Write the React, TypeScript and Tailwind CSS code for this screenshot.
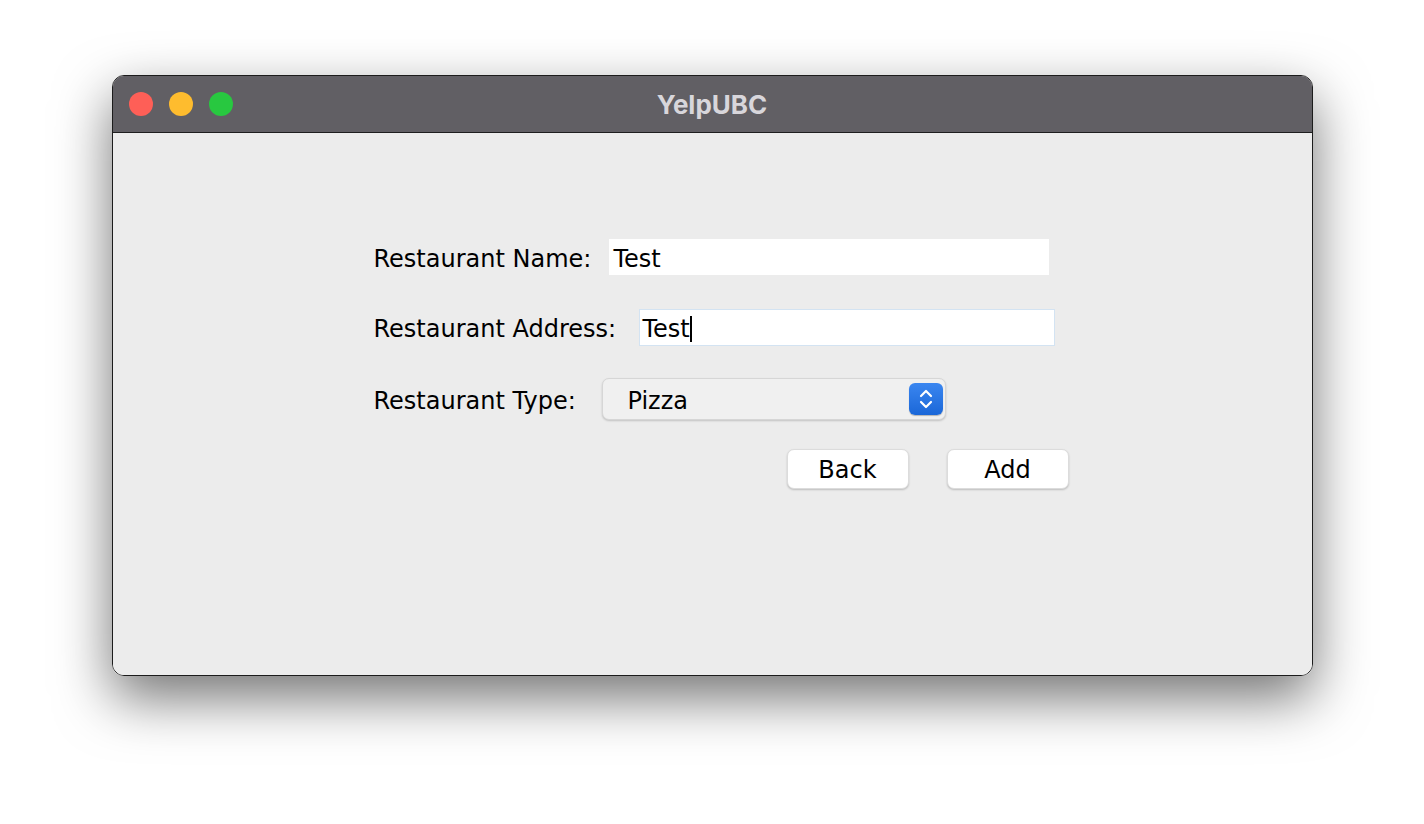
import React from "react";

const fieldFont = { fontFamily: '"DejaVu Sans", "Liberation Sans", sans-serif' };

function TrafficLights() {
  return (
    <div className="flex items-center gap-[16px] pl-[16px]">
      <span className="block w-[24px] h-[24px] rounded-full bg-[#fe5f57]" />
      <span className="block w-[24px] h-[24px] rounded-full bg-[#febc2e]" />
      <span className="block w-[24px] h-[24px] rounded-full bg-[#28c840]" />
    </div>
  );
}

function Stepper() {
  return (
    <span className="flex items-center justify-center w-[34px] h-[32px] rounded-[6px] bg-gradient-to-b from-[#3a86f0] to-[#1a67d8] shadow-[0_1px_1px_rgba(0,0,0,0.25)]">
      <svg width="18" height="26" viewBox="0 0 18 26" fill="none">
        <path d="M4 10 L9 5 L14 10" stroke="white" strokeWidth="2.2" strokeLinecap="round" strokeLinejoin="round" />
        <path d="M4 16 L9 21 L14 16" stroke="white" strokeWidth="2.2" strokeLinecap="round" strokeLinejoin="round" />
      </svg>
    </span>
  );
}

export default function App() {
  return (
    <div className="w-[1424px] h-[824px] bg-white overflow-hidden pt-[75px]">
      {/* Window */}
      <div className="mx-auto w-[1201px] h-[601px] rounded-[12px] border border-[#1c1c1c] overflow-hidden flex flex-col shadow-[0_22px_55px_rgba(0,0,0,0.55)]">
        {/* Title bar */}
        <div className="relative h-[57px] bg-[#615f64] border-b border-[#1e1e1e] flex items-center">
          <TrafficLights />
          <div
            className="absolute inset-0 flex items-center justify-center text-[26px] font-bold text-[#d8d6db]"
            style={{ fontFamily: 'Inter, "Liberation Sans", sans-serif' }}
          >
            YelpUBC
          </div>
        </div>

        {/* Content */}
        <div className="flex-1 bg-[#ececec] pl-[261px] pt-[106px] text-black text-[24px]" style={fieldFont}>
          <div className="flex items-center h-[36px]">
            <span className="w-[235px] shrink-0 pt-[3px]">Restaurant Name:</span>
            <div className="w-[440px] h-[36px] bg-white flex items-center pl-[5px] pt-[3px]">Test</div>
          </div>

          <div className="flex items-center h-[37px] mt-[34px]">
            <span className="w-[265px] shrink-0 pt-[3px]">Restaurant Address:</span>
            <div className="w-[416px] h-[37px] bg-white border border-[#d3e3f2] flex items-center pl-[3px] pt-[3px]">
              <span>Test</span>
              <span className="w-[2px] h-[26px] bg-black" />
            </div>
          </div>

          <div className="flex items-center h-[42px] mt-[32px]">
            <span className="w-[228px] shrink-0 pt-[3px]">Restaurant Type:</span>
            <div className="w-[344px] h-[42px] rounded-[7px] bg-[#f0f0f0] border border-[#d6d6d6] shadow-[0_1px_2px_rgba(0,0,0,0.18)] flex items-center justify-between pl-[25px] pr-[2px]">
              <span className="pt-[3px]">Pizza</span>
              <Stepper />
            </div>
          </div>

          <div className="flex items-center gap-[38px] ml-[413px] mt-[29px]">
            <button className="w-[122px] h-[40px] rounded-[7px] bg-white border border-[#dcdcdc] shadow-[0_1px_2px_rgba(0,0,0,0.2)] flex items-center justify-center pt-[2px]">
              Back
            </button>
            <button className="w-[122px] h-[40px] rounded-[7px] bg-white border border-[#dcdcdc] shadow-[0_1px_2px_rgba(0,0,0,0.2)] flex items-center justify-center pt-[2px]">
              Add
            </button>
          </div>
        </div>
      </div>
    </div>
  );
}
